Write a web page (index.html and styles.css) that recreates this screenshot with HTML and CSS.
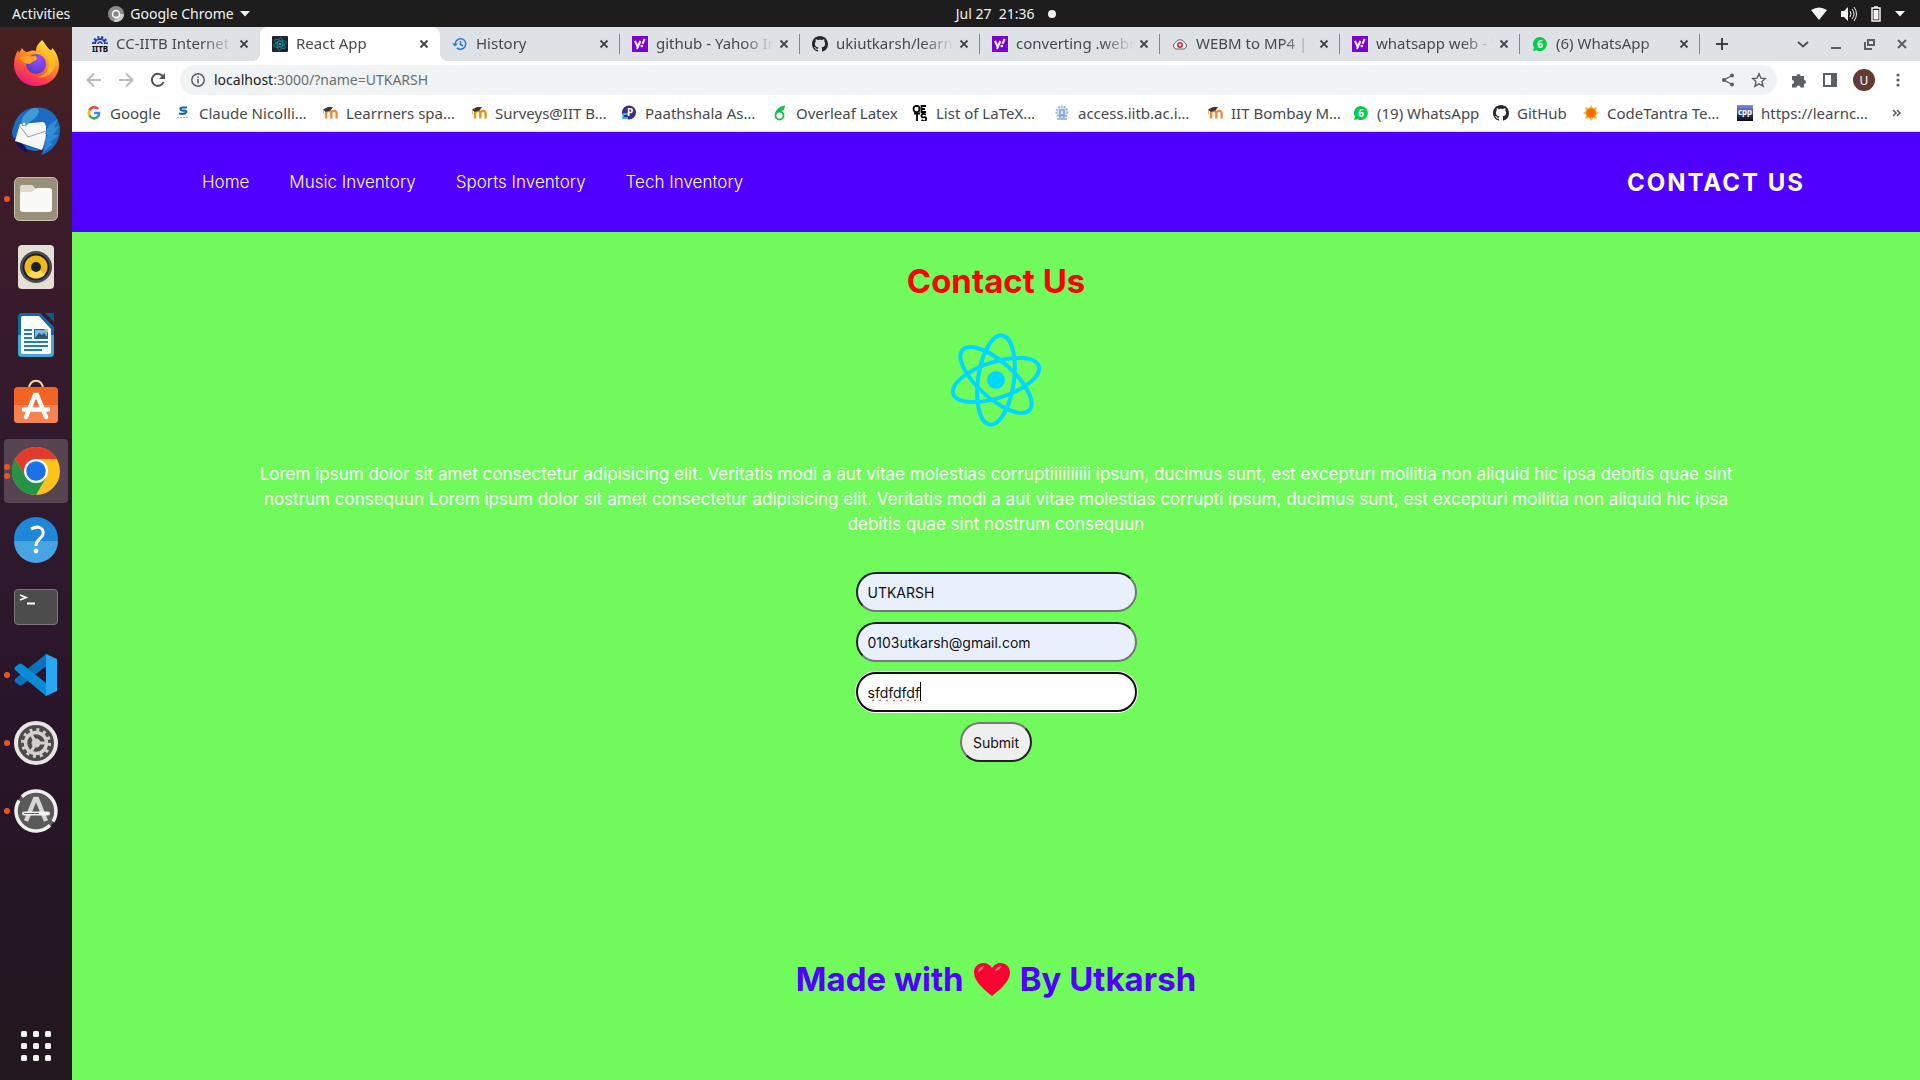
FILE: index.html
```html
<!DOCTYPE html>
<html lang="en">
<head>
<meta charset="utf-8">
<title>React App</title>
<link rel="stylesheet" href="styles.css">
</head>
<body>
<svg class="sprite" aria-hidden="true">
  <defs>
    <symbol id="close" viewBox="0 0 16 16"><path d="M4.500 4.500l7 7M11.500 4.500l-7 7" stroke="currentColor" stroke-width="2" fill="none"/></symbol>
    <symbol id="yahoo" viewBox="0 0 16 16"><rect width="16" height="16" fill="#7e00d8"/><path d="M3 5l2.500 5.500M8.300 5L5 13M12.600 2.800l-2.100 5" stroke="#fff" stroke-width="2" fill="none"/><circle cx="9.800" cy="10" r="1.300" fill="#fff"/></symbol>
    <symbol id="github" viewBox="0 0 16 16"><path fill="#24292f" d="M8 0C3.580 0 0 3.580 0 8c0 3.540 2.290 6.530 5.470 7.590.4.070.55-.17.55-.38 0-.19-.01-.82-.01-1.490-2.010.37-2.530-.49-2.690-.94-.09-.23-.48-.94-.82-1.130-.28-.15-.68-.52-.01-.53.63-.01 1.080.58 1.230.82.72 1.210 1.870.87 2.330.66.07-.52.28-.87.51-1.070-1.780-.2-3.640-.89-3.640-3.950 0-.87.31-1.590.82-2.150-.08-.2-.36-1.020.08-2.120 0 0 .67-.21 2.200.82.64-.18 1.320-.27 2-.27s1.360.09 2 .27c1.530-1.040 2.200-.82 2.200-.82.44 1.100.16 1.920.08 2.120.51.56.82 1.270.82 2.150 0 3.070-1.870 3.750-3.650 3.950.29.25.54.73.54 1.480 0 1.070-.01 1.930-.01 2.200 0 .21.15.46.55.38A8.010 8.010 0 0016 8c0-4.420-3.580-8-8-8z"/></symbol>
    <symbol id="whatsapp" viewBox="0 0 16 16"><path d="M8 1a7 7 0 1 1-3.400 13.200L1 15l.9-3.500A7 7 0 0 1 8 1z" fill="#00d048"/><text x="8" y="12" text-anchor="middle" font-size="10" font-weight="700" fill="#fff">6</text></symbol>
    <symbol id="moodle" viewBox="0 0 16 16"><path d="M4 13.500V8.500M9.300 13.500V8.500a2.600 2.600 0 0 0-5.200 0M14.600 13.500V8.500a2.600 2.600 0 0 0-5.200 0" stroke="currentColor" stroke-width="2.400" fill="none"/><path d="M1 4.500L6 2h5L8.500 5.500 3.500 7z" fill="#3b3938"/><path d="M1.500 5v4" stroke="#e8b090"/></symbol>
    <symbol id="atom" viewBox="0 0 96 96"><g fill="none" stroke="currentColor" stroke-width="4"><ellipse cx="48" cy="48" rx="45" ry="18" transform="rotate(-18 48 48)"/><ellipse cx="48" cy="48" rx="45" ry="18" transform="rotate(42 48 48)"/><ellipse cx="48" cy="48" rx="45" ry="18" transform="rotate(98 48 48)"/></g><circle cx="48" cy="48" r="9" fill="currentColor"/></symbol>
  </defs>
</svg>

<header class="topbar">
  <div class="topbar-left">
    <button class="plain">Activities</button>
    <button class="plain app-menu">
      <svg width="16" height="16" viewBox="0 0 16 16"><circle cx="8" cy="8" r="8" fill="#8b8b8b"/><path d="M8 8h8a8 8 0 0 1-10 7.700z" fill="#c9c9c9"/><circle cx="8" cy="8" r="3.500" fill="#888" stroke="#fff" stroke-width="1.500"/></svg>
      Google Chrome
      <svg width="10" height="6" viewBox="0 0 10 6"><path d="M0 0h10L5 5.500z" fill="#f2f2f2"/></svg>
    </button>
  </div>
  <div class="clock"><time>Jul 27&nbsp; 21:36</time><span class="clock-dot"></span></div>
  <div class="status">
    <svg width="16" height="14" viewBox="0 0 16 14"><path d="M0 3Q8-2 16 3L8 13z" fill="#f2f2f2"/></svg>
    <svg width="16" height="16" viewBox="0 0 16 16"><path d="M0 5h3l4-4v14l-4-4H0z" fill="#f2f2f2"/><path d="M9 5q2 3 0 6M11 3q4 5 0 10M13 1q5 7 0 14" stroke="#f2f2f2" fill="none"/></svg>
    <svg width="10" height="16" viewBox="0 0 10 16"><path d="M1 2h8v13H1zM3 1h4" stroke="#f2f2f2" stroke-width="1.500" fill="none"/><path d="M2.500 4h5v9.500h-5z" fill="#f2f2f2"/></svg>
    <svg width="10" height="6" viewBox="0 0 10 6"><path d="M0 0h10L5 5.500z" fill="#f2f2f2"/></svg>
  </div>
</header>

<div class="desktop">
  <nav class="dock" aria-label="Dock">
    <button class="dock-item" aria-label="Firefox"><svg width="48" height="48" viewBox="0 0 48 48"><defs><linearGradient id="ff" x1=".8" y1="0" x2=".3" y2="1"><stop offset="0" stop-color="#fff24a"/><stop offset=".4" stop-color="#ff9a1f"/><stop offset=".75" stop-color="#ff4346"/><stop offset="1" stop-color="#e31587"/></linearGradient><radialGradient id="fp" cx=".6" cy=".25" r=".8"><stop offset="0" stop-color="#a04bff"/><stop offset="1" stop-color="#4f3bbd"/></radialGradient></defs><path d="M30 1c3 3 4 6 7 9 2 2 3 1 3-1 3 2 7 9 7 17 0 12-10 21-23 21S2 37 2 25c0-6 2-10 4-14l1 3 3-5c1 2 3 4 5 4 3-1 6-2 9-1 0-5 3-8 6-11z" fill="url(#ff)"/><circle cx="24" cy="25" r="10" fill="url(#fp)"/><path d="M8 19c5-3 10-1 16-2l1 3c-1 2-5 2-7 5-3 0-8-2-10-6z" fill="#ffa51e"/><path d="M24 14c6-2 13 3 13 11 0 7-5 12-12 13 12 2 18-6 18-14 0-7-5-10-9-15 1 4-5 2-10 5z" fill="#ffc52c" opacity=".75"/></svg></button>
    <button class="dock-item" aria-label="Thunderbird"><svg width="48" height="48" viewBox="0 0 48 48"><path d="M3 15C8 3 20-1 31 1c10 2 17 11 17 23-1 13-9 21-19 24l3-6-8 2C10 43 0 35 0 24z" fill="#1c6cc4"/><path d="M2 30c1 8 7 14 14 16l-3-7z" fill="#1d1251"/><path d="M8 17l23-2c4 1 3 8 3 12 0 5-2 10-4 16L3 34z" fill="#f7f7f8"/><path d="M7 18l9 12 18-6" fill="none" stroke="#9a9da3"/><path d="M10 19c-2-8 4-15 12-18 4 0 6 2 4 6-2 5-8 6-12 12z" fill="#419bd9"/><circle cx="12" cy="17" r="1.500" fill="#e8f4ff"/><path d="M37 18l9-6-4 9 6-2-7 9 6 0-9 7 3 2-10 8 3-9-2-1 4-7-3-1z" fill="#2f8dd3"/></svg></button>
    <button class="dock-item running" aria-label="Files"><svg width="48" height="48" viewBox="0 0 48 48"><rect x="2.500" y="2.500" width="43" height="43" rx="5" fill="#989079" stroke="#c8c3b3"/><path d="M8 12q0-2 2-2h9q2 0 3 2l2 2v8H8z" fill="#dedacd"/><path d="M10 17h10l5-4h12q3 0 3 3v18q0 3-3 3H11q-3 0-3-3V19q0-2 2-2z" fill="#f8f8f7"/></svg></button>
    <button class="dock-item" aria-label="Rhythmbox"><svg width="48" height="48" viewBox="0 0 48 48"><rect x="6" y="2" width="36" height="44" rx="4" fill="#e4dfd5"/><circle cx="24" cy="24" r="16" fill="#4a4d54"/><circle cx="24" cy="24" r="13.500" fill="#1e2030"/><circle cx="24" cy="24" r="11.500" fill="#efb916"/><path d="M15 31a11.500 11.500 0 0 0 18 0l-9-7z" fill="#ffd955"/><circle cx="24" cy="24" r="5" fill="#1a2024"/></svg></button>
    <button class="dock-item" aria-label="LibreOffice Writer"><svg width="48" height="48" viewBox="0 0 48 48"><path d="M10 2h18l14 14v26q0 4-4 4H10q-4 0-4-4V6q0-4 4-4z" fill="#0d6ca5"/><path d="M6 24h36v18q0 4-4 4H10q-4 0-4-4z" fill="#43a7d8"/><path d="M33 2h9v9z" fill="#0e5d8c"/><path d="M11 5h16l12 13v23q0 2-2 2H11q-2 0-2-2V7q0-2 2-2z" fill="#fff"/><path d="M12 19h8M12 23h8M12 27h8M12 31h24M12 35h24M12 39h18" stroke="#1882c0" stroke-width="2"/><rect x="22.500" y="18.500" width="13" height="9" fill="#78b9e7" stroke="#1769a0"/><path d="M23 27l4-5 3 2 2-2 4 5z" fill="#385269"/><path d="M32 18h4v4z" fill="#f5c211"/></svg></button>
    <button class="dock-item" aria-label="Ubuntu Software"><svg width="48" height="48" viewBox="0 0 48 48"><path d="M17 10c0-11 14-11 14 0" fill="none" stroke="#f4d6a4" stroke-width="2"/><rect x="2" y="8" width="44" height="36" rx="4" fill="#f26326"/><path d="M2 26h44v14q0 4-4 4H6q-4 0-4-4z" fill="#f58250"/><path d="M14 38l9-22h2l9 22M12 30.500h24" stroke="#fff" stroke-width="4.500" stroke-linecap="round" fill="none"/></svg></button>
    <button class="dock-item running double current" aria-label="Google Chrome"><svg width="48" height="48" viewBox="0 0 48 48"><circle cx="24" cy="24" r="24" fill="#fcc31e"/><path d="M3.200 12A24 24 0 0 1 44.800 12H24L13.600 30z" fill="#e23b2e"/><path d="M3.200 12A24 24 0 0 0 24 48l10.400-18H13.600z" fill="#259447"/><circle cx="24" cy="24" r="12" fill="#fff"/><circle cx="24" cy="24" r="9.800" fill="#1b72e8"/></svg></button>
    <button class="dock-item" aria-label="Help"><svg width="48" height="48" viewBox="0 0 48 48"><circle cx="24" cy="24" r="22" fill="#1f87d8"/><path d="M2 26a22 22 0 0 0 44 0z" fill="#48a5e4"/><path d="M19 14c7-4 13-1 12 5-1 5-7 5-7 12" fill="none" stroke="#fff" stroke-width="3"/><circle cx="24" cy="36" r="2.400" fill="#fff"/></svg></button>
    <button class="dock-item" aria-label="Terminal"><svg width="48" height="48" viewBox="0 0 48 48"><rect x="2.500" y="6.500" width="43" height="35" rx="3.500" fill="#4c4c4c" stroke="#777"/><path d="M8 12l6 2.500L8 17M15 20.500h8" stroke="#fff" stroke-width="1.800" fill="none"/></svg></button>
    <button class="dock-item running" aria-label="Visual Studio Code"><svg width="48" height="48" viewBox="0 0 48 48"><path d="M34 3v12L10 34q-2 1-3 0l-4-3q-1-1 0-3z" fill="#0874bd"/><path d="M34 45V32L10 13q-2-1-3 0l-4 3q-1 1 0 3z" fill="#0a8bd8"/><path d="M34 3l11 5v32l-11 5z" fill="#29a6f2"/></svg></button>
    <button class="dock-item running" aria-label="Settings"><svg width="48" height="48" viewBox="0 0 48 48"><circle cx="24" cy="24" r="20" fill="#4b4b4a" stroke="#e7e6e4" stroke-width="4"/><circle cx="24" cy="24" r="13.500" fill="none" stroke="#d3d1ce" stroke-width="3" stroke-dasharray="3 4.070"/><circle cx="24" cy="24" r="10.500" fill="none" stroke="#d3d1ce" stroke-width="3.500"/><circle cx="24" cy="24" r="4.500" fill="#d3d1ce"/><path d="M24 24h10M24 24l-5-9M24 24l-5 9" stroke="#d3d1ce" stroke-width="3"/></svg></button>
    <button class="dock-item running" aria-label="Software Updater"><svg width="48" height="48" viewBox="0 0 48 48"><circle cx="24" cy="24" r="21" fill="#595959"/><path d="M10 9.700A20 20 0 0 1 41 34.500M38 38.300A20 20 0 0 1 7 13.500" fill="none" stroke="#eee" stroke-width="3.500"/><path d="M14 34l9-22h2l9 22" stroke="#d6d6d6" stroke-width="4.500" fill="none"/><path d="M12 26.500h24" stroke="#f2f2f2" stroke-width="4" stroke-linecap="round"/><path d="M12 26.500h15" stroke="#8a4b93"/></svg></button>
    <button class="dock-item apps" aria-label="Show Applications"><svg width="32" height="32" viewBox="0 0 32 32" fill="#f2f2f0"><rect x="1" y="1" width="6" height="6" rx="1.500"/><rect x="13" y="1" width="6" height="6" rx="1.500"/><rect x="25" y="1" width="6" height="6" rx="1.500"/><rect x="1" y="13" width="6" height="6" rx="1.500"/><rect x="13" y="13" width="6" height="6" rx="1.500"/><rect x="25" y="13" width="6" height="6" rx="1.500"/><rect x="1" y="25" width="6" height="6" rx="1.500"/><rect x="13" y="25" width="6" height="6" rx="1.500"/><rect x="25" y="25" width="6" height="6" rx="1.500"/></svg></button>
  </nav>

  <div class="browser">
    <div class="tabstrip">
      <div class="tab"><svg class="favicon" viewBox="0 0 16 16"><path d="M3 8a5 5 0 0 1 10 0" fill="none" stroke="#2b3fae" stroke-width="2"/><path d="M1.500 8a6.500 6.500 0 0 1 13 0" fill="none" stroke="#2b3fae" stroke-width="3" stroke-dasharray="2 1.700"/><path d="M6 8a2 2 0 0 1 4 0" fill="none" stroke="#2b3fae" stroke-width="1.500"/><text x="8" y="16" font-size="8" font-weight="700" text-anchor="middle">IITB</text></svg><span class="tab-title">CC-IITB Internet A</span><button class="tab-close" aria-label="Close tab"><svg width="16" height="16"><use href="#close"/></svg></button></div>
      <div class="tab active"><svg class="favicon cyan" viewBox="0 0 16 16"><rect width="16" height="16" rx="1" fill="#20232a"/><use href="#atom" x="1" y="1" width="14" height="14"/></svg><span class="tab-title">React App</span><button class="tab-close" aria-label="Close tab"><svg width="16" height="16"><use href="#close"/></svg></button></div>
      <div class="tab"><svg class="favicon" viewBox="0 0 16 16"><path d="M3.200 8a5.300 5.300 0 1 1 1.500 3.700M8.500 5v3.500L11 10" fill="none" stroke="#2a73e8" stroke-width="1.500"/><path d="M0 7.500h6L3 10.500z" fill="#2a73e8"/></svg><span class="tab-title">History</span><button class="tab-close" aria-label="Close tab"><svg width="16" height="16"><use href="#close"/></svg></button></div>
      <div class="tab"><svg class="favicon"><use href="#yahoo"/></svg><span class="tab-title">github - Yahoo In</span><button class="tab-close" aria-label="Close tab"><svg width="16" height="16"><use href="#close"/></svg></button></div>
      <div class="tab"><svg class="favicon"><use href="#github"/></svg><span class="tab-title">ukiutkarsh/learn</span><button class="tab-close" aria-label="Close tab"><svg width="16" height="16"><use href="#close"/></svg></button></div>
      <div class="tab"><svg class="favicon"><use href="#yahoo"/></svg><span class="tab-title">converting .webm</span><button class="tab-close" aria-label="Close tab"><svg width="16" height="16"><use href="#close"/></svg></button></div>
      <div class="tab"><svg class="favicon" viewBox="0 0 16 16"><path d="M4 13a3.500 3.500 0 0 1-.5-6.500 5 5 0 0 1 9 0A3.500 3.500 0 0 1 12 13z" fill="#eee" stroke="#666"/><circle cx="8" cy="9" r="2.200" fill="none" stroke="#d9253b" stroke-width="1.600"/></svg><span class="tab-title">WEBM to MP4 | C</span><button class="tab-close" aria-label="Close tab"><svg width="16" height="16"><use href="#close"/></svg></button></div>
      <div class="tab"><svg class="favicon"><use href="#yahoo"/></svg><span class="tab-title">whatsapp web - Y</span><button class="tab-close" aria-label="Close tab"><svg width="16" height="16"><use href="#close"/></svg></button></div>
      <div class="tab"><svg class="favicon"><use href="#whatsapp"/></svg><span class="tab-title">(6) WhatsApp</span><button class="tab-close" aria-label="Close tab"><svg width="16" height="16"><use href="#close"/></svg></button></div>
      <button class="plain new-tab" aria-label="New tab"><svg width="12" height="12" viewBox="0 0 12 12"><path d="M6 0v12M0 6h12" stroke="#3c4043" stroke-width="2"/></svg></button>
      <div class="window-controls">
        <button class="plain" aria-label="Search tabs"><svg width="12" height="12" viewBox="0 0 12 12"><path d="M1 4l5 4.500L11 4" fill="none" stroke="#4d5156" stroke-width="2"/></svg></button>
        <button class="plain" aria-label="Minimize"><svg width="12" height="12" viewBox="0 0 12 12"><path d="M1 10h10" stroke="#5a5d61" stroke-width="2"/></svg></button>
        <button class="plain" aria-label="Restore"><svg width="12" height="12" viewBox="0 0 12 12"><path d="M5 2h6v5H5zM2 4v7h7" fill="none" stroke="#5a5d61" stroke-width="2"/></svg></button>
        <button class="plain" aria-label="Close"><svg width="12" height="12" viewBox="0 0 12 12"><path d="M2 2l8 8M10 2l-8 8" stroke="#5a5d61" stroke-width="2"/></svg></button>
      </div>
    </div>

    <div class="toolbar">
      <div class="nav-buttons">
        <button class="plain" aria-label="Back"><svg width="16" height="16" viewBox="0 0 16 16"><path d="M15 8H2M8 1.500L1.500 8 8 14.500" fill="none" stroke="#b9babc" stroke-width="2"/></svg></button>
        <button class="plain" aria-label="Forward"><svg width="16" height="16" viewBox="0 0 16 16"><path d="M1 8h13M8 1.500L14.500 8 8 14.500" fill="none" stroke="#b9babc" stroke-width="2"/></svg></button>
        <button class="plain" aria-label="Reload"><svg width="16" height="16" viewBox="0 0 16 16"><path d="M13.500 10A6 6 0 1 1 12.500 4" fill="none" stroke="#4f5357" stroke-width="2"/><path d="M15 1v6H9z" fill="#4f5357"/></svg></button>
      </div>
      <div class="omnibox">
        <svg width="14" height="14" viewBox="0 0 14 14"><circle cx="7" cy="7" r="6.200" fill="none" stroke="#5a5d61" stroke-width="1.500"/><path d="M7 6v4.500M7 3.500v1.500" stroke="#5a5d61" stroke-width="1.600"/></svg>
        <a class="url" href="#"><span class="host">localhost</span>:3000/?name=UTKARSH</a>
        <button class="plain" aria-label="Share"><svg width="14" height="14" viewBox="0 0 14 14"><path d="M11 2.500L3 7l8 4.500" fill="none" stroke="#5a5d61" stroke-width="1.400"/><g fill="#5a5d61"><circle cx="11" cy="2.500" r="2"/><circle cx="3" cy="7" r="2"/><circle cx="11" cy="11.500" r="2"/></g></svg></button>
        <button class="plain" aria-label="Bookmark"><svg width="16" height="16" viewBox="0 0 16 16"><path d="M8 1.800l1.900 4.300 4.600.4-3.500 3.100 1.100 4.600L8 11.800l-4.100 2.400L5 9.600 1.500 6.500l4.600-.4z" fill="none" stroke="#5a5d61" stroke-width="1.400"/></svg></button>
      </div>
      <div class="tools">
        <button class="plain" aria-label="Extensions"><svg width="16" height="16" viewBox="0 0 16 16"><path d="M1 4h4.500a2 2 0 1 1 4 0H13v4a2 2 0 1 1 0 4v3.500H9.500a2 2 0 1 0-4 0H1V12a2 2 0 1 0 0-4z" fill="#5a6066"/></svg></button>
        <button class="plain" aria-label="Side panel"><svg width="16" height="16" viewBox="0 0 16 16"><path d="M2 2h12v12H2z" fill="none" stroke="#5a6066" stroke-width="2"/><path d="M9 2h5v12H9z" fill="#5a6066"/></svg></button>
        <button class="plain avatar" aria-label="Profile">U</button>
        <button class="plain" aria-label="Menu"><svg width="16" height="16" viewBox="0 0 16 16" fill="#5a5d61"><circle cx="8" cy="3" r="1.600"/><circle cx="8" cy="8" r="1.600"/><circle cx="8" cy="13" r="1.600"/></svg></button>
      </div>
    </div>

    <div class="bookmarks">
      <a href="#"><svg class="favicon" viewBox="0 0 16 16" fill="none" stroke-width="2.500"><path d="M12 4A5 5 0 0 0 3.500 5.500" stroke="#ea4335"/><path d="M3.500 5.500a5 5 0 0 0 0 5" stroke="#fbbc05"/><path d="M3.500 10.500a5 5 0 0 0 8 1.500" stroke="#34a853"/><path d="M11.500 12A5 5 0 0 0 13 8H8" stroke="#4285f4"/></svg>Google</a>
      <a href="#"><svg class="favicon" viewBox="0 0 16 16"><path d="M12 2.500H8q-3 0-2.500 1.800T9 5.500q3 0 2 2T4 8.500" fill="none" stroke="#1763a8" stroke-width="2.200"/><path d="M2 12.500h12" stroke="#aaa" stroke-dasharray="2 1"/></svg>Claude Nicolli…</a>
      <a href="#"><svg class="favicon orange"><use href="#moodle"/></svg>Learrners spa…</a>
      <a href="#"><svg class="favicon amber"><use href="#moodle"/></svg>Surveys@IIT B…</a>
      <a href="#"><svg class="favicon" viewBox="0 0 16 16"><circle cx="8" cy="7.500" r="7" fill="#3c2b87"/><path d="M2 8h5v2H3v2h4v2H1z" fill="#37b5c5"/><text x="6" y="11" font-size="10" font-weight="700" fill="#fff">P</text></svg>Paathshala As…</a>
      <a href="#"><svg class="favicon" viewBox="0 0 16 16"><circle cx="7.500" cy="10.500" r="4" fill="none" stroke="#12bf4c" stroke-width="1.800"/><path d="M4 9q1-6 9-7.500M6 5q3 1 6-1.500" fill="none" stroke="#12bf4c" stroke-width="1.800"/></svg>Overleaf Latex</a>
      <a href="#"><svg class="favicon" viewBox="0 0 16 16" fill="none" stroke="#000" stroke-width="1.800"><ellipse cx="4.500" cy="4" rx="3" ry="3.200"/><path d="M14 1H9.500v6H14M9.500 4H13M2 8.500h6M5 8.500V16M14 9.500q-4.500-1.500-4.500 1t2.500 1.800 2 2.300-4.500.5"/></svg>List of LaTeX…</a>
      <a href="#"><svg class="favicon" viewBox="0 0 16 16"><circle cx="8" cy="7" r="5.500" fill="#d5e3f4" stroke="#9fb9dc" stroke-width="2" stroke-dasharray="2 1"/><path d="M6 5h4v5H6zM3 14h10M5 12l3-2 3 2" fill="none" stroke="#83a3d0" stroke-width="1.500"/></svg>access.iitb.ac.i…</a>
      <a href="#"><svg class="favicon orange"><use href="#moodle"/></svg>IIT Bombay M…</a>
      <a href="#"><svg class="favicon"><use href="#whatsapp"/></svg>(19) WhatsApp</a>
      <a href="#"><svg class="favicon"><use href="#github"/></svg>GitHub</a>
      <a href="#"><svg class="favicon" viewBox="0 0 16 16"><path d="M8 0l2 3 4-1-1 4 3 2-3 2 1 4-4-1-2 3-2-3-4 1 1-4-3-2 3-2-1-4 4 1z" fill="#e3c444"/><circle cx="8" cy="8" r="4.800" fill="#ff6a00"/></svg>CodeTantra Te…</a>
      <a href="#"><svg class="favicon" viewBox="0 0 16 16"><defs><linearGradient id="cp" x2="0" y2="1"><stop stop-color="#7892ef"/><stop offset=".6" stop-color="#31366c"/><stop offset="1" stop-color="#0a0b18"/></linearGradient></defs><rect width="16" height="16" fill="url(#cp)"/><text x="8" y="10" text-anchor="middle" font-size="8" font-weight="700" fill="#fff">cpp</text></svg>https://learnc…</a>
      <button class="plain more" aria-label="More bookmarks"><svg width="10" height="8" viewBox="0 0 10 8"><path d="M1 1l3 3-3 3M5 1l3 3-3 3" fill="none" stroke="#5a5d61" stroke-width="1.600"/></svg></button>
    </div>

    <div class="page">
      <nav class="site-nav">
        <div class="links">
          <a href="#">Home</a>
          <a href="#">Music Inventory</a>
          <a href="#">Sports Inventory</a>
          <a href="#">Tech Inventory</a>
        </div>
        <a class="brand" href="#">CONTACT US</a>
      </nav>
      <main>
        <h1>Contact Us</h1>
        <svg class="logo" viewBox="0 0 96 96"><use href="#atom"/></svg>
        <p>Lorem ipsum dolor sit amet consectetur adipisicing elit. Veritatis modi a aut vitae molestias corruptiiiiiiiiii ipsum, ducimus sunt, est excepturi mollitia non aliquid hic ipsa debitis quae sint nostrum consequun Lorem ipsum dolor sit amet consectetur adipisicing elit. Veritatis modi a aut vitae molestias corrupti ipsum, ducimus sunt, est excepturi mollitia non aliquid hic ipsa debitis quae sint nostrum consequun</p>
        <form>
          <input class="field filled" type="text" aria-label="Name" value="UTKARSH">
          <input class="field filled" type="email" aria-label="Email" value="0103utkarsh@gmail.com">
          <div class="editing">
            <input class="field focused" type="text" aria-label="Message" value="sfdfdfdf" spellcheck="false">
            <span class="caret"></span>
          </div>
          <button class="submit" type="button">Submit</button>
        </form>
      </main>
      <footer>
        <h2>Made with <svg class="heart" viewBox="0 0 36 33" role="img" aria-label="love"><path d="M18 33C11 27 0 19 0 9.500 0 4 4 0 9.500 0c3.500 0 6.700 2 8.500 5 1.800-3 5-5 8.500-5C32 0 36 4 36 9.500 36 19 25 27 18 33z" fill="#ff0034"/><path d="M4 9q0-5 6-6-1 4-6 6zM21 8q1-4 6-5 0 4-6 5z" fill="#ff7580"/></svg> By Utkarsh</h2>
      </footer>
    </div>
  </div>
</div>
</body>
</html>
```
FILE: styles.css
```css
* { box-sizing: border-box; }

body {
  margin: 0;
  min-height: 100vh;
  display: flex;
  flex-direction: column;
  font-family: "Noto Sans", "Open Sans", sans-serif;
  font-size: 14px;
  color: #45494d;
}

a { color: inherit; text-decoration: none; }
svg { flex: none; display: block; }
button { font: inherit; color: inherit; }
.sprite { position: absolute; width: 0; height: 0; }

.plain {
  display: flex;
  align-items: center;
  justify-content: center;
  border: 0;
  padding: 0;
  background: none;
}

/* System bar */
.topbar {
  display: grid;
  grid-template-columns: 10fr auto 9fr;
  align-items: center;
  height: 27px;
  padding: 0 15px 0 12px;
  background: #1d1d1d;
  color: #f2f2f2;
}
.topbar-left { display: flex; gap: 38px; }
.app-menu { gap: 6px; }
.clock { display: flex; align-items: center; gap: 13px; }
.clock-dot { width: 8px; height: 8px; border-radius: 50%; background: #f2f2f2; }
.status { display: flex; align-items: center; justify-content: flex-end; gap: 14px; }

.desktop { flex: 1; display: flex; }

/* Dock */
.dock {
  flex: none;
  width: 72px;
  display: flex;
  flex-direction: column;
  align-items: center;
  gap: 4px;
  padding: 4px 0 2px;
  background: linear-gradient(#48211f, #3c1b2a 18%, #301a2e 42%, #29152a 65%, #22171e);
}
.dock-item {
  position: relative;
  flex: none;
  width: 64px;
  height: 64px;
  display: flex;
  align-items: center;
  justify-content: center;
  padding: 0;
  border: 0;
  border-radius: 4px;
  background: none;
}
.current { background: #574453; }
.running::before {
  content: "";
  position: absolute;
  left: 0;
  top: 29px;
  width: 6px;
  height: 6px;
  border-radius: 50%;
  background: #e95420;
}
.double::before { top: 25px; box-shadow: 0 9px #e95420; }
.apps { margin-top: auto; }

/* Browser */
.browser { flex: 1; min-width: 0; display: flex; flex-direction: column; background: #fff; }
.favicon { width: 16px; height: 16px; }

.tabstrip { display: flex; height: 34px; padding-left: 8px; background: #dee1e6; font-size: 15px; line-height: 20px; }
.tab {
  position: relative;
  flex: 0 1 180px;
  min-width: 0;
  display: flex;
  align-items: center;
  gap: 8px;
  padding: 0 8px 0 12px;
}
.tab:not(.active)::after {
  content: "";
  position: absolute;
  right: 0;
  top: 7px;
  width: 1px;
  height: 20px;
  background: #84878c;
}
.tab:first-child::after { display: none; }
.tab-title {
  flex: 1;
  padding-bottom: 2px;
  margin-right: -6px;
  overflow: hidden;
  white-space: nowrap;
  mask-image: linear-gradient(to right, #000 calc(100% - 32px), transparent);
}
.tab-close { display: flex; padding: 0; border: 0; background: none; color: #45494d; }
.active { background: #fff; border-radius: 8px 8px 0 0; z-index: 1; }
.active::before, .active::after {
  content: "";
  position: absolute;
  bottom: 0;
  width: 8px;
  height: 8px;
}
.active::before { left: -8px; background: radial-gradient(circle at 0 0, transparent 8px, #fff 8px); }
.tab.active::after {
  top: auto;
  right: -8px;
  background: radial-gradient(circle at 100% 0, transparent 8px, #fff 8px);
}
.new-tab { width: 44px; }
.window-controls { display: flex; gap: 21px; margin-left: auto; padding-right: 12px; }

.toolbar { display: flex; align-items: center; height: 38px; padding: 0 14px; }
.nav-buttons { display: flex; gap: 16px; padding-right: 14px; }
.omnibox {
  flex: 1;
  display: flex;
  align-items: center;
  gap: 16px;
  height: 30px;
  padding: 0 10px 0 11px;
  border-radius: 15px;
  background: #eff3f4;
}
.url { flex: 1; margin-left: -7px; padding-bottom: 2px; color: #6b6f73; }
.host { color: #202124; }
.tools { display: flex; align-items: center; gap: 15px; padding-left: 14px; }
.avatar { width: 22px; height: 22px; border-radius: 50%; background: #623b34; color: #fff; font-size: 12px; }

.bookmarks {
  display: grid;
  grid-template-columns: 89px 147px 149px 150px 151px 140px 142px 153px 146px 140px 90px 154px 1fr auto;
  align-items: center;
  height: 33px;
  padding: 0 18px 5px 14px;
  border-bottom: 1px solid #dadce0;
  font-size: 15px;
  line-height: 20px;
}
.bookmarks a { display: flex; align-items: center; gap: 8px; white-space: nowrap; }
.orange { color: #f58a35; }
.amber { color: #e8970c; }
.cyan { color: #0fb5c9; }

/* Site */
.page {
  flex: 1;
  display: flex;
  flex-direction: column;
  background: #70fa5c;
  font-family: Inter, sans-serif;
  font-size: 17px;
}
.site-nav {
  display: flex;
  align-items: center;
  justify-content: space-between;
  height: 100px;
  padding: 0 115px 0 130px;
  background: #5000ff;
  color: #fff;
}
.links { display: flex; gap: 40px; font-weight: 300; }
.brand { font-size: 24px; font-weight: 700; letter-spacing: 2px; }

main { display: flex; flex-direction: column; align-items: center; padding-top: 25px; }
h1, h2 { margin: 0; font-size: 33px; line-height: 48px; font-weight: 700; }
h1 { color: #f00; }
.logo { width: 96px; height: 96px; margin: 27px 0 34px; color: #00d8ff; }
p { width: 100%; margin: 0 0 35px; padding: 0 180px; line-height: 25px; text-align: center; color: #fff; }
form { display: flex; flex-direction: column; align-items: center; gap: 10px; }
.field {
  display: block;
  width: 281px;
  height: 40px;
  padding: 0 10px;
  border: 2px inset #767676;
  border-radius: 20px;
  background: #fff;
  color: #111;
  font-family: inherit;
  font-size: 14px;
}
.filled { background: #e8f0fe; }
.focused {
  border: 2px solid #101010;
  box-shadow: 0 0 0 1px #fff;
  outline: 0;
  text-decoration: underline wavy #f02048 1px;
  text-decoration-skip-ink: none;
}
.editing { position: relative; }
.caret {
  position: absolute;
  left: 64px;
  top: 10px;
  width: 1px;
  height: 19px;
  background: #000;
}
.submit {
  width: 72px;
  height: 40px;
  padding: 0;
  border: 2px outset #767676;
  border-radius: 20px;
  background: #efefef;
  color: #111;
  font-size: 14px;
}
footer { margin-top: 193px; padding-bottom: 40px; color: #5000ff; }
h2 { display: flex; align-items: center; justify-content: center; gap: 10px; }
.heart { width: 36px; height: 33px; }
```
